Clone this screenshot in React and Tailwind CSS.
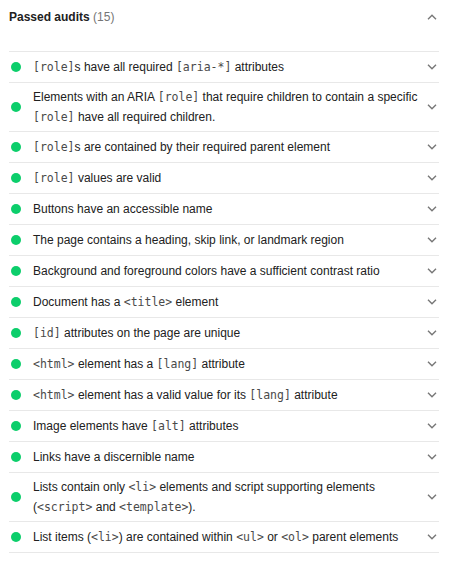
import React from "react";

const C = ({ children }) => (
  <code className="font-['DejaVu_Sans_Mono',monospace] text-[11.5px] text-[#4a4a4a]">{children}</code>
);

const audits = [
  <><C>[role]</C>s have all required <C>[aria-*]</C> attributes</>,
  <>Elements with an ARIA <C>[role]</C> that require children to contain a specific <C>[role]</C> have all required children.</>,
  <><C>[role]</C>s are contained by their required parent element</>,
  <><C>[role]</C> values are valid</>,
  <>Buttons have an accessible name</>,
  <>The page contains a heading, skip link, or landmark region</>,
  <>Background and foreground colors have a sufficient contrast ratio</>,
  <>Document has a <C>&lt;title&gt;</C> element</>,
  <><C>[id]</C> attributes on the page are unique</>,
  <><C>&lt;html&gt;</C> element has a <C>[lang]</C> attribute</>,
  <><C>&lt;html&gt;</C> element has a valid value for its <C>[lang]</C> attribute</>,
  <>Image elements have <C>[alt]</C> attributes</>,
  <>Links have a discernible name</>,
  <>Lists contain only <C>&lt;li&gt;</C> elements and script supporting elements (<C>&lt;script&gt;</C> and <C>&lt;template&gt;</C>).</>,
  <>List items (<C>&lt;li&gt;</C>) are contained within <C>&lt;ul&gt;</C> or <C>&lt;ol&gt;</C> parent elements</>,
];

const Chevron = ({ up }) => (
  <svg width="10" height="6" viewBox="0 0 10 6" className="shrink-0">
    <path
      d={up ? "M1 5.2L5 1.2L9 5.2" : "M1 0.8L5 4.8L9 0.8"}
      fill="none"
      stroke="#777"
      strokeWidth="1.4"
    />
  </svg>
);

export default function App() {
  return (
    <div className="bg-white w-[450px] min-h-[561px] pl-[9px] pr-[11px] font-['Liberation_Sans',Arial,sans-serif] text-[#212121]">
      <div className="flex items-center justify-between h-[33px] mb-[18px] pr-[2px]">
        <div className="text-[12px] font-bold">
          Passed audits <span className="font-normal text-[#757575]">(15)</span>
        </div>
        <Chevron up />
      </div>
      <div className="border-t border-[#e8e8e8]">
        {audits.map((a, i) => (
          <div key={i} className="flex items-center min-h-[31px] py-[4px] border-b border-[#e8e8e8]">
            <div className="w-[10px] h-[10px] rounded-full bg-[#0cce6b] ml-[2px] mr-[12px] shrink-0" />
            <div className="flex-1 text-[12px] leading-[20px] pr-[8px]">{a}</div>
            <div className="mr-[2px]">
              <Chevron />
            </div>
          </div>
        ))}
      </div>
    </div>
  );
}
